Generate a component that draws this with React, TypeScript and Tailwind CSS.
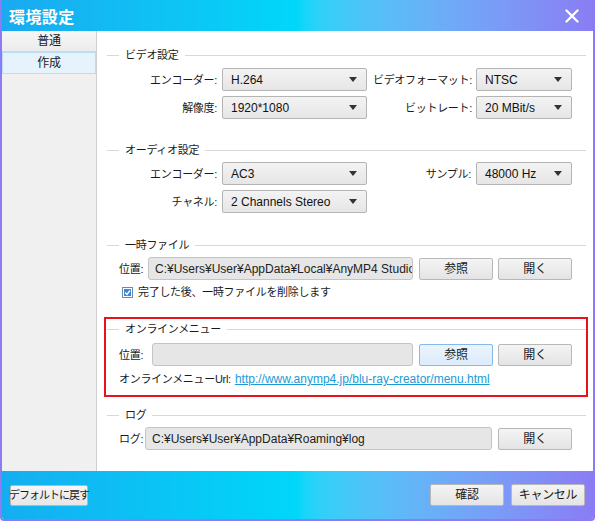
import React from "react";

const font = { fontFamily: '"Liberation Sans", "Noto Sans CJK JP", "Noto Sans", sans-serif' };

// japanese labels are narrower in the original UI font
const jp = "text-[11px] leading-[14px] whitespace-nowrap tracking-[-0.3px] text-[#1a1a1a]";

function Legend({ title }: { title: string }) {
  return (
    <div className="flex items-center h-4">
      <div className="w-[12px] h-px bg-[#d8d8d8]" />
      <span className={`px-[6px] ${jp}`}>{title}</span>
      <div className="flex-1 h-px bg-[#d8d8d8]" />
    </div>
  );
}

function Select({ value, width }: { value: string; width: string }) {
  return (
    <div
      className={`${width} h-[23px] shrink-0 flex items-center justify-between pl-[8px] pr-[9px] border border-[#b4b4b4] rounded-[2px] bg-gradient-to-b from-[#f3f3f3] to-[#e6e6e6] text-[12px] leading-none text-[#111] whitespace-nowrap`}
    >
      <span>{value}</span>
      <svg width="8" height="5" viewBox="0 0 8 5">
        <path d="M0 0 L8 0 L4 5 Z" fill="#333" />
      </svg>
    </div>
  );
}

function Btn({ label, active }: { label: string; active?: boolean }) {
  return (
    <button
      className={`w-[74px] h-[22px] shrink-0 flex items-center justify-center border rounded-[2px] ${jp} text-[12px] ${
        active
          ? "border-[#86b8e8] bg-gradient-to-b from-[#eaf4fc] to-[#dcecfb]"
          : "border-[#b8b8b8] bg-gradient-to-b from-[#f4f4f4] to-[#e4e4e4]"
      }`}
    >
      {label}
    </button>
  );
}

function Field({ value, width }: { value: string; width: string }) {
  return (
    <div
      className={`${width} h-[23px] shrink-0 flex items-center pl-[6px] border border-[#c4c4c4] rounded-[3px] bg-[#e6e6e6] text-[12px] leading-none text-[#222] overflow-hidden whitespace-nowrap`}
    >
      {value}
    </div>
  );
}

export default function App() {
  return (
    <div
      style={font}
      className="w-[595px] h-[521px] flex flex-col border-2 border-t-0 border-[#8a7cf4] rounded-b-[4px] overflow-hidden bg-white"
    >
      {/* title bar */}
      <div className="h-[31px] shrink-0 flex items-center justify-between -mx-[2px] pl-[9px] pr-[16px] bg-gradient-to-r from-[#1aa9ef] via-[#00d7f9] to-[#8a7cf4]">
        <span className="text-white text-[16px] font-bold tracking-wide" style={{ fontFamily: '"Noto Sans CJK JP", sans-serif' }}>
          環境設定
        </span>
        <svg width="14" height="14" viewBox="0 0 14 14">
          <path d="M1.5 1.5 L12.5 12.5 M12.5 1.5 L1.5 12.5" stroke="#fff" strokeWidth="2.4" strokeLinecap="round" />
        </svg>
      </div>

      <div className="flex-1 flex min-h-0">
        {/* sidebar */}
        <div className="w-[95px] shrink-0 bg-[#f0f0f0] border-r border-[#cfcfcf] flex flex-col">
          <div className={`h-[21px] flex items-center justify-center bg-gradient-to-b from-[#f7f7f7] to-[#ececec] border-b border-[#d6d6d6] ${jp} text-[12px]`}>
            普通
          </div>
          <div className={`h-[22px] flex items-center justify-center bg-[#e6f3fc] border border-[#bcdcf2] ${jp} text-[12px]`}>
            作成
          </div>
        </div>

        {/* content */}
        <div className="flex-1 flex flex-col pl-[10px] pr-[8px] pt-[16px]">
          {/* video */}
          <Legend title="ビデオ設定" />
          <div className="mt-[5px] flex flex-col gap-[5px]">
            <div className="flex items-center">
              <span className={`w-[110px] text-right mr-[5px] ${jp}`}>エンコーダー:</span>
              <Select value="H.264" width="w-[145px]" />
              <span className={`flex-1 text-right mr-[4px] ${jp}`}>ビデオフォーマット:</span>
              <Select value="NTSC" width="w-[96px]" />
              <div className="w-[14px]" />
            </div>
            <div className="flex items-center">
              <span className={`w-[110px] text-right mr-[5px] ${jp}`}>解像度:</span>
              <Select value="1920*1080" width="w-[145px]" />
              <span className={`flex-1 text-right mr-[4px] ${jp}`}>ビットレート:</span>
              <Select value="20 MBit/s" width="w-[96px]" />
              <div className="w-[14px]" />
            </div>
          </div>

          {/* audio */}
          <div className="mt-[23px]">
            <Legend title="オーディオ設定" />
          </div>
          <div className="mt-[4px] flex flex-col gap-[5px]">
            <div className="flex items-center">
              <span className={`w-[110px] text-right mr-[5px] ${jp}`}>エンコーダー:</span>
              <Select value="AC3" width="w-[145px]" />
              <span className={`flex-1 text-right mr-[5px] ${jp}`}>サンプル:</span>
              <Select value="48000 Hz" width="w-[96px]" />
              <div className="w-[14px]" />
            </div>
            <div className="flex items-center">
              <span className={`w-[110px] text-right mr-[5px] ${jp}`}>チャネル:</span>
              <Select value="2 Channels Stereo" width="w-[145px]" />
            </div>
          </div>

          {/* temp */}
          <div className="mt-[24px]">
            <Legend title="一時ファイル" />
          </div>
          <div className="mt-[4px] flex items-center pl-[12px] pr-[14px]">
            <span className={`w-[29px] ${jp}`}>位置:</span>
            <Field value="C:¥Users¥User¥AppData¥Local¥AnyMP4 Studio¥" width="w-[265px]" />
            <div className="ml-[6px] flex gap-[5px]">
              <Btn label="参照" />
              <Btn label="開く" />
            </div>
          </div>
          <div className={`mt-[5px] flex items-center pl-[15px] h-[14px] ${jp}`}>
            <span className="w-[11px] h-[11px] border border-[#6a8bb0] bg-white flex items-center justify-center mr-[5px]">
              <span className="w-[7px] h-[7px] bg-[#3a86d8] flex items-center justify-center">
                <svg width="7" height="7" viewBox="0 0 7 7">
                  <path d="M1 3.5 L3 5.5 L6 1.5" stroke="#fff" strokeWidth="1.3" fill="none" />
                </svg>
              </span>
            </span>
            完了した後、一時ファイルを削除します
          </div>

          {/* online menu */}
          <div className="relative mt-[22px] pb-[11px]">
            <div className="absolute -left-[3px] -right-[2px] -top-[4px] bottom-0 border-2 border-[#e8121a] pointer-events-none" />
            <Legend title="オンラインメニュー" />
            <div className="mt-[6px] flex items-center pl-[12px] pr-[14px]">
              <span className={`w-[33px] ${jp}`}>位置:</span>
              <Field value="" width="w-[261px]" />
              <div className="ml-[6px] flex gap-[5px]">
                <Btn label="参照" active />
                <Btn label="開く" />
              </div>
            </div>
            <div className="mt-[6px] flex items-center pl-[12px] h-[14px]">
              <span className={`mr-[4px] ${jp}`}>オンラインメニューUrl:</span>
              <a className="text-[12px] leading-none text-[#1c9ad6] underline whitespace-nowrap">
                http://www.anymp4.jp/blu-ray-creator/menu.html
              </a>
            </div>
          </div>

          {/* log */}
          <div className="mt-[10px]">
            <Legend title="ログ" />
          </div>
          <div className="mt-[4px] flex items-center pl-[12px] pr-[14px]">
            <span className={`w-[26px] ${jp}`}>ログ:</span>
            <Field value="C:¥Users¥User¥AppData¥Roaming¥log" width="w-[347px]" />
            <div className="ml-[6px]">
              <Btn label="開く" />
            </div>
          </div>
        </div>
      </div>

      {/* footer */}
      <div className="h-[48px] shrink-0 flex items-center justify-between pl-[8px] pr-[8px] bg-gradient-to-r from-[#14aef0] via-[#00d7f9] to-[#8a7cf4]">
        <button className={`h-[21px] w-[78px] flex items-center justify-center border border-[#b8b8b8] rounded-[2px] bg-gradient-to-b from-[#f6f6f6] to-[#e6e6e6] ${jp} tracking-[-1px]`}>
          デフォルトに戻す
        </button>
        <div className="flex gap-[7px]">
          <Btn label="確認" />
          <Btn label="キャンセル" />
        </div>
      </div>
    </div>
  );
}
